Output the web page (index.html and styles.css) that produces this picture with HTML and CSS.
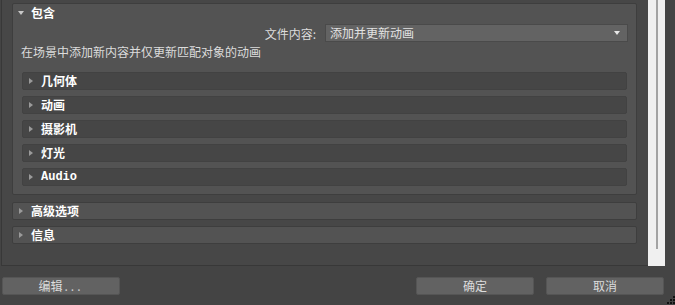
FILE: index.html
```html
<!DOCTYPE html>
<html lang="zh">
<head>
<meta charset="utf-8">
<link rel="stylesheet" href="styles.css">
</head>
<body>
<div class="main">
  <div class="scroll-area">
    <div class="section open">
      <div class="sec-head">
        <span class="tri-down"></span>
        <span class="title">包含</span>
      </div>
      <div class="field-row">
        <span class="label">文件内容:</span>
        <div class="dropdown">
          <span>添加并更新动画</span>
          <span class="dd-arrow"></span>
        </div>
      </div>
      <div class="desc">在场景中添加新内容并仅更新匹配对象的动画</div>
      <div class="bars">
        <div class="bar"><span class="tri-right"></span><span class="title">几何体</span></div>
        <div class="bar"><span class="tri-right"></span><span class="title">动画</span></div>
        <div class="bar"><span class="tri-right"></span><span class="title">摄影机</span></div>
        <div class="bar"><span class="tri-right"></span><span class="title">灯光</span></div>
        <div class="bar"><span class="tri-right"></span><span class="title latin">Audio</span></div>
      </div>
    </div>
    <div class="section closed"><span class="tri-right"></span><span class="title">高级选项</span></div>
    <div class="section closed"><span class="tri-right"></span><span class="title">信息</span></div>
  </div>
  <div class="scrollbar"><div class="thumb"></div></div>
  <div class="right-gap"></div>
</div>
<div class="footer">
  <button class="btn">编辑<span class="dots">...</span></button>
  <div class="spacer"></div>
  <button class="btn">确定</button>
  <button class="btn">取消</button>
</div>
<svg class="grip" width="8" height="9" viewBox="0 0 8 9">
  <rect x="6" y="0" width="2" height="2" fill="#111"/>
  <rect x="3" y="3" width="2" height="2" fill="#111"/>
  <rect x="6" y="3" width="2" height="2" fill="#111"/>
  <rect x="0" y="6" width="2" height="2" fill="#111"/>
  <rect x="3" y="6" width="2" height="2" fill="#111"/>
  <rect x="6" y="6" width="2" height="2" fill="#111"/>
</svg>
</body>
</html>
```
FILE: styles.css
```css
* { box-sizing: border-box; }
html, body {
  margin: 0;
  padding: 0;
  width: 675px;
  height: 305px;
  overflow: hidden;
  background: #444444;
  font-family: "Noto Sans CJK SC", "Noto Sans", sans-serif;
  font-size: 12px;
  color: #dcdcdc;
  position: relative;
}
.main {
  display: flex;
  height: 266px;
}
.scroll-area {
  margin-left: 1px;
  width: 647px;
  height: 266px;
  background: #474747;
  border-left: 1px solid #383838;
  border-bottom: 1px solid #383838;
  padding: 3px 0 0 10px;
  display: flex;
  flex-direction: column;
}
.scrollbar {
  width: 17px;
  height: 266px;
  background: #f0f0f0;
  position: relative;
}
.thumb {
  position: absolute;
  left: 8px;
  top: 0;
  width: 2px;
  height: 249px;
  background: #a3a3a3;
}
.right-gap { flex: 1; }

.section {
  width: 625px;
  background: #535353;
  border: 1px solid #3e3e3e;
  border-radius: 2px;
}
.section.open {
  padding: 0 9px 8px 9px;
}
.sec-head {
  height: 18px;
  margin: 0 -9px;
  padding-left: 5px;
  display: flex;
  align-items: center;
}
.title {
  font-weight: bold;
  color: #ffffff;
  font-size: 12px;
  line-height: 16px;
}
.latin {
  font-family: "Liberation Mono", "DejaVu Sans Mono", monospace;
}
.tri-down {
  width: 0; height: 0;
  border-left: 3px solid transparent;
  border-right: 3px solid transparent;
  border-top: 4px solid #c8c8c8;
  margin-right: 7px;
}
.tri-right {
  width: 0; height: 0;
  border-top: 3px solid transparent;
  border-bottom: 3px solid transparent;
  border-left: 4px solid #9a9a9a;
  margin-right: 8px;
}
.field-row {
  margin-top: 2px;
  margin-right: -1px;
  display: flex;
  justify-content: flex-end;
  align-items: center;
  height: 18px;
}
.label {
  margin-right: 9px;
  color: #dcdcdc;
}
.dropdown {
  width: 303px;
  height: 18px;
  background: #636363;
  border: 1px solid #4a4a4a;
  display: flex;
  align-items: center;
  justify-content: space-between;
  padding: 0 7px 0 4px;
  color: #e2e2e2;
  line-height: 16px;
}
.dd-arrow {
  width: 0; height: 0;
  border-left: 3px solid transparent;
  border-right: 3px solid transparent;
  border-top: 4px solid #e8e8e8;
}
.desc {
  margin-top: 2px;
  margin-left: -1px;
  line-height: 16px;
  height: 16px;
}
.bars {
  margin-top: 12px;
  display: flex;
  flex-direction: column;
  gap: 6px;
}
.bar {
  height: 18px;
  background: #464646;
  border: 1px solid #424242;
  border-radius: 2px;
  display: flex;
  align-items: center;
  padding-left: 6px;
}
.section.closed {
  height: 18px;
  margin-top: 7px;
  display: flex;
  align-items: center;
  padding-left: 6px;
}
.section.closed + .section.closed {
  margin-top: 6px;
}
.footer {
  display: flex;
  align-items: center;
  height: 39px;
  padding: 0 11px 0 2px;
  gap: 12px;
}
.spacer { flex: 1; }
.btn {
  width: 118px;
  height: 18px;
  background: #626262;
  border: 1px solid #555555;
  border-radius: 2px;
  color: #dcdcdc;
  font-family: "Noto Sans CJK SC", "Noto Sans", sans-serif;
  font-size: 12px;
  line-height: 14px;
  padding: 0;
  margin-top: 1px;
}
.dots {
  letter-spacing: 3px;
  margin-left: 2px;
  color: #cfcfcf;
}
.grip {
  position: absolute;
  right: 0;
  bottom: 0;
}
```
